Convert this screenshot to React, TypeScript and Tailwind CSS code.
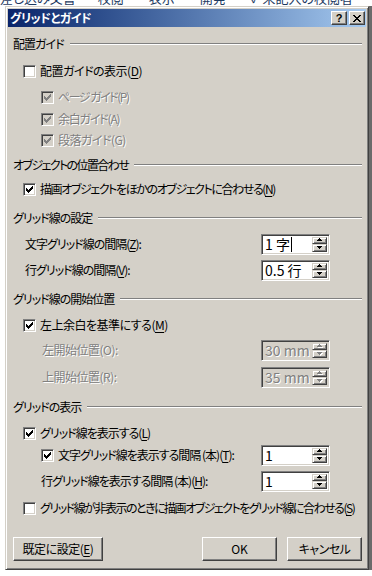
import React from "react";

const FONT = "[font-family:'Noto_Sans_CJK_JP','Noto_Sans',sans-serif] [font-feature-settings:'palt']";

function CheckMark({ color }: { color: string }) {
  return (
    <svg width="7" height="7" viewBox="0 0 7 7" shapeRendering="crispEdges">
      <g fill={color}>
        <rect x="6" y="0" width="1" height="1" />
        <rect x="5" y="1" width="2" height="1" />
        <rect x="0" y="2" width="1" height="1" />
        <rect x="4" y="2" width="3" height="1" />
        <rect x="0" y="3" width="2" height="1" />
        <rect x="3" y="3" width="3" height="1" />
        <rect x="0" y="4" width="5" height="1" />
        <rect x="1" y="5" width="3" height="1" />
        <rect x="2" y="6" width="1" height="1" />
      </g>
    </svg>
  );
}

function Check({ checked, disabled }: { checked?: boolean; disabled?: boolean }) {
  return (
    <div
      className={
        "w-[13px] h-[13px] shrink-0 flex items-center justify-center border border-t-[#808080] border-l-[#808080] border-r-white border-b-white shadow-[inset_1px_1px_#404040,inset_-1px_-1px_#d4d0c8] " +
        (disabled ? "bg-[#d4d0c8]" : "bg-white")
      }
    >
      {checked && <CheckMark color={disabled ? "#808080" : "#000"} />}
    </div>
  );
}

function Acc({ k }: { k: string }) {
  return (
    <>
      (<span className="underline underline-offset-[2px]">{k}</span>)
    </>
  );
}

function Section({ title, className }: { title: string; className: string }) {
  return (
    <div className={"h-[20px] flex items-center " + className}>
      <span className="whitespace-nowrap">{title}</span>
      <div className="flex-1 ml-[6px] h-[2px] border-t border-t-[#808080] border-b border-b-white" />
    </div>
  );
}

const DIS = "text-[#808080] [text-shadow:1px_1px_0_#ffffff]";

function Tri({ up, fill }: { up?: boolean; fill: string }) {
  return (
    <g fill={fill}>
      {up ? (
        <>
          <rect x="3" y="0" width="1" height="1" />
          <rect x="2" y="1" width="3" height="1" />
          <rect x="1" y="2" width="5" height="1" />
        </>
      ) : (
        <>
          <rect x="1" y="0" width="5" height="1" />
          <rect x="2" y="1" width="3" height="1" />
          <rect x="3" y="2" width="1" height="1" />
        </>
      )}
    </g>
  );
}

function Arrow({ up, disabled }: { up?: boolean; disabled?: boolean }) {
  return (
    <svg width="7" height="4" viewBox="0 0 7 4" shapeRendering="crispEdges">
      {disabled && (
        <g transform="translate(1,1)">
          <Tri up={up} fill="#fff" />
        </g>
      )}
      <Tri up={up} fill={disabled ? "#808080" : "#000"} />
    </svg>
  );
}

function SpinBtn({ up, disabled }: { up?: boolean; disabled?: boolean }) {
  return (
    <div className="flex-1 bg-[#d4d0c8] flex items-center justify-center border border-t-[#d4d0c8] border-l-[#d4d0c8] border-r-[#404040] border-b-[#404040] shadow-[inset_1px_1px_white,inset_-1px_-1px_#808080]">
      <Arrow up={up} disabled={disabled} />
    </div>
  );
}

function Spinner({ value, disabled, caret }: { value: string; disabled?: boolean; caret?: boolean }) {
  return (
    <div
      className={
        "w-[69px] h-[21px] shrink-0 flex border border-t-[#808080] border-l-[#808080] border-r-white border-b-white shadow-[inset_1px_1px_#404040,inset_-1px_-1px_#d4d0c8] " +
        (disabled ? "bg-[#d4d0c8]" : "bg-white")
      }
    >
      <div
        className={
          "flex-1 flex items-center pl-[3px] text-[14px] leading-none whitespace-nowrap tracking-normal " +
          (disabled ? DIS : "text-black")
        }
      >
        {value}
        {caret && <span className="inline-block w-[1px] h-[15px] bg-black ml-[1px]" />}
      </div>
      <div className="w-[17px] flex flex-col py-[2px] pr-[2px]">
        <SpinBtn up disabled={disabled} />
        <SpinBtn disabled={disabled} />
      </div>
    </div>
  );
}

function Btn({ children, className }: { children: React.ReactNode; className: string }) {
  return (
    <div
      className={
        "h-[24px] flex items-center justify-center bg-[#d4d0c8] border border-t-white border-l-white border-r-[#404040] border-b-[#404040] shadow-[inset_-1px_-1px_#808080] " +
        className
      }
    >
      {children}
    </div>
  );
}

export default function App() {
  return (
    <div className={"w-[372px] h-[576px] bg-white overflow-hidden text-[12px] leading-none text-black tracking-[-1px] " + FONT}>
      {/* underlying app strip */}
      <div className="h-[6px] overflow-hidden relative">
        <div className="flex -mt-[10px] text-[13px] leading-[15px] text-[#1e3a5f] whitespace-nowrap tracking-normal">
          <span className="ml-0">差し込み文書</span>
          <span className="ml-[22px]">校閲</span>
          <span className="ml-[25px]">表示</span>
          <span className="ml-[25px]">開発</span>
          <span className="ml-[25px]">✓ 未記入の校閲者</span>
        </div>
      </div>
      <div className="flex">
        <div className="w-[5px] shrink-0 bg-white" />
        {/* dialog */}
        <div className="w-[364px] h-[564px] bg-[#d4d0c8] border border-t-[#d4d0c8] border-l-[#d4d0c8] border-r-[#404040] border-b-[#404040] shadow-[inset_1px_1px_white,inset_-1px_-1px_#808080] p-[2px] flex flex-col">
          {/* title bar */}
          <div className="h-[18px] shrink-0 flex items-center bg-gradient-to-r from-[#0a246a] to-[#a6caf0] pl-[2px] pr-[1px]">
            <span className="text-white font-bold text-[12px] tracking-[-0.5px]">グリッドとガイド</span>
            <div className="ml-auto flex gap-[2px]">
              <div className="w-[16px] h-[14px] bg-[#d4d0c8] flex items-center justify-center border border-t-white border-l-white border-r-[#404040] border-b-[#404040] shadow-[inset_-1px_-1px_#808080] text-[11px] font-bold tracking-normal [font-family:'Liberation_Sans',sans-serif]">
                ?
              </div>
              <div className="w-[16px] h-[14px] bg-[#d4d0c8] flex items-center justify-center border border-t-white border-l-white border-r-[#404040] border-b-[#404040] shadow-[inset_-1px_-1px_#808080]">
                <svg width="8" height="7" viewBox="0 0 8 7" shapeRendering="crispEdges">
                  <path
                    fill="#000"
                    d="M0 0h2v1h1v1h2V1h1V0h2v1H7v1H6v1H5v1h1v1h1v1h1v1H6V6H5V5H3v1H2v1H0V6h1V5h1V4h1V3H2V2H1V1H0z"
                  />
                </svg>
              </div>
            </div>
          </div>

          {/* body */}
          <div className="flex-1 flex flex-col pt-[7px] pl-[5px] pr-[4px]">
            <Section title="配置ガイド" className="" />
            <div className="h-[20px] mt-[7px] flex items-center pl-[10px] gap-[4px]">
              <Check />
              <span className="whitespace-nowrap tracking-[-0.5px]">配置ガイドの表示<Acc k="D" /></span>
            </div>
            <div className="h-[20px] mt-[6px] flex items-center pl-[28px] gap-[4px]">
              <Check checked disabled />
              <span className={"whitespace-nowrap tracking-[-1.5px] " + DIS}>ページ ガイド(P)</span>
            </div>
            <div className="h-[20px] mt-[2px] flex items-center pl-[28px] gap-[4px]">
              <Check checked disabled />
              <span className={"whitespace-nowrap tracking-[-1.2px] " + DIS}>余白ガイド(A)</span>
            </div>
            <div className="h-[20px] mt-[1px] flex items-center pl-[28px] gap-[4px]">
              <Check checked disabled />
              <span className={"whitespace-nowrap tracking-[-0.5px] " + DIS}>段落ガイド(G)</span>
            </div>

            <div className="h-[20px] mt-[5px] flex items-center">
              <span className="whitespace-nowrap tracking-[-1.6px]">オブジェクトの位置合わせ</span>
              <div className="flex-1 ml-[6px] h-[2px] border-t border-t-[#808080] border-b border-b-white" />
            </div>
            <div className="h-[20px] mt-[4px] flex items-center pl-[10px] gap-[4px]">
              <Check checked />
              <span className="whitespace-nowrap tracking-[-1.4px]">描画オブジェクトをほかのオブジェクトに合わせる<Acc k="N" /></span>
            </div>

            <Section title="グリッド線の設定" className="mt-[9px]" />
            <div className="h-[20px] mt-[6px] flex items-center pl-[12px] pr-[32px]">
              <span className="whitespace-nowrap">文字グリッド線の間隔<Acc k="Z" />:</span>
              <div className="ml-auto">
                <Spinner value="1 字" caret />
              </div>
            </div>
            <div className="h-[20px] mt-[6px] flex items-center pl-[12px] pr-[32px]">
              <span className="whitespace-nowrap">行グリッド線の間隔<Acc k="V" />:</span>
              <div className="ml-auto">
                <Spinner value="0.5 行" />
              </div>
            </div>

            <Section title="グリッド線の開始位置" className="mt-[9px]" />
            <div className="h-[20px] mt-[6px] flex items-center pl-[10px] gap-[4px]">
              <Check checked />
              <span className="whitespace-nowrap tracking-[-0.5px]">左上余白を基準にする<Acc k="M" /></span>
            </div>
            <div className="h-[20px] mt-[5px] flex items-center pl-[29px] pr-[32px]">
              <span className={"whitespace-nowrap tracking-[-0.5px] " + DIS}>左開始位置(O):</span>
              <div className="ml-auto">
                <Spinner value="30 mm" disabled />
              </div>
            </div>
            <div className="h-[20px] mt-[7px] flex items-center pl-[29px] pr-[32px]">
              <span className={"whitespace-nowrap tracking-[-0.5px] " + DIS}>上開始位置(R):</span>
              <div className="ml-auto">
                <Spinner value="35 mm" disabled />
              </div>
            </div>

            <Section title="グリッドの表示" className="mt-[10px]" />
            <div className="h-[20px] mt-[6px] flex items-center pl-[10px] gap-[4px]">
              <Check checked />
              <span className="whitespace-nowrap">グリッド線を表示する<Acc k="L" /></span>
            </div>
            <div className="h-[20px] mt-[2px] flex items-center pl-[28px] pr-[32px]">
              <Check checked />
              <span className="whitespace-nowrap ml-[4px]">文字グリッド線を表示する間隔 (本)<Acc k="T" />:</span>
              <div className="ml-auto">
                <Spinner value="1" />
              </div>
            </div>
            <div className="h-[20px] mt-[6px] flex items-center pl-[28px] pr-[32px]">
              <span className="whitespace-nowrap">行グリッド線を表示する間隔 (本)<Acc k="H" />:</span>
              <div className="ml-auto">
                <Spinner value="1" />
              </div>
            </div>
            <div className="h-[20px] mt-[7px] flex items-center pl-[10px] gap-[4px]">
              <Check />
              <span className="whitespace-nowrap tracking-[-1.5px]">グリッド線が非表示のときに描画オブジェクトをグリッド線に合わせる<Acc k="S" /></span>
            </div>

            <div className="mt-[19px] flex items-center">
              <Btn className="w-[90px]">
                <span className="tracking-[-0.5px]">既定に設定<Acc k="E" /></span>
              </Btn>
              <Btn className="w-[75px] ml-auto">
                <span className="tracking-normal">OK</span>
              </Btn>
              <Btn className="w-[75px] ml-[10px]">
                <span className="tracking-[-0.5px]">キャンセル</span>
              </Btn>
            </div>
          </div>
        </div>
        <div className="w-[3px] shrink-0 bg-[#6b6b6b]" />
      </div>
    </div>
  );
}
